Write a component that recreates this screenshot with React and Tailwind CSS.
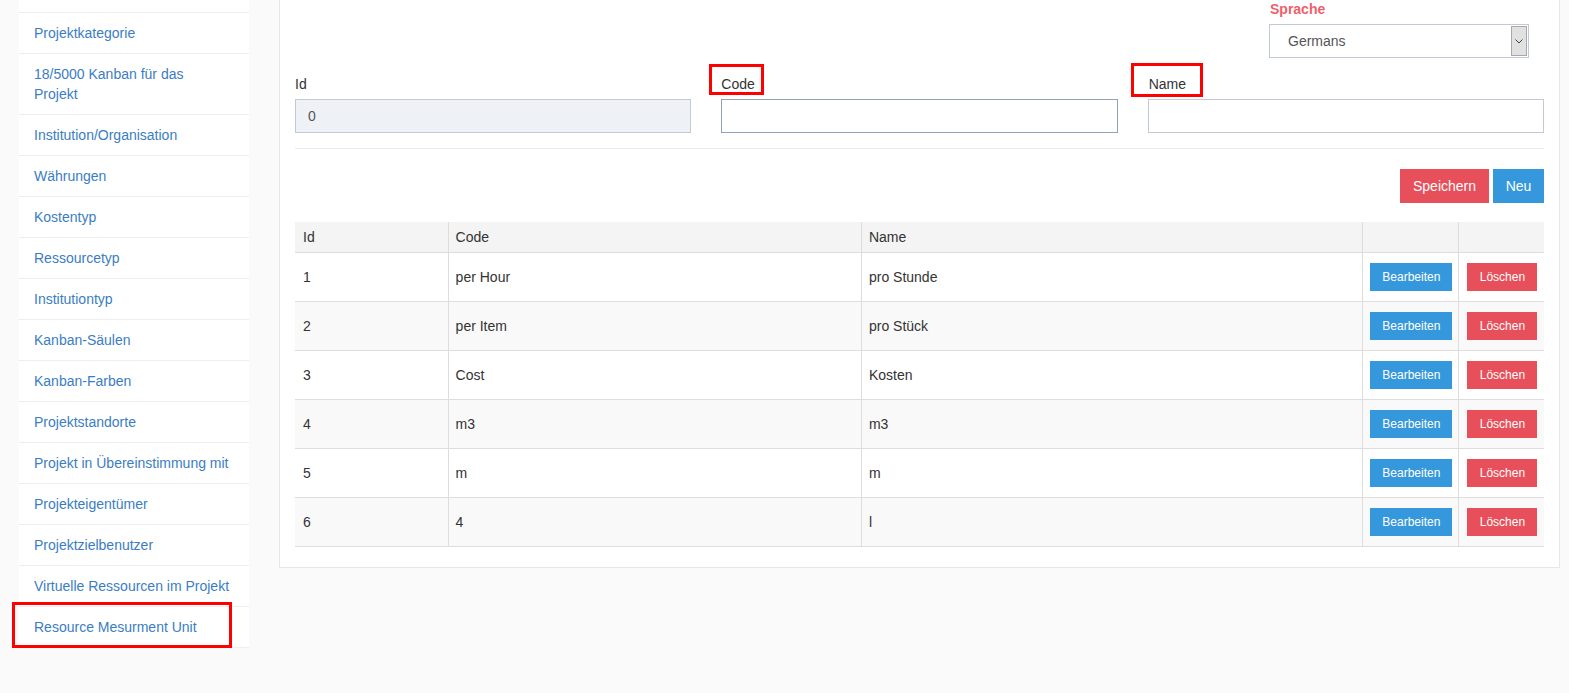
import React from 'react';

const menu = [
  'Projektkategorie',
  '18/5000 Kanban für das Projekt',
  'Institution/Organisation',
  'Währungen',
  'Kostentyp',
  'Ressourcetyp',
  'Institutiontyp',
  'Kanban-Säulen',
  'Kanban-Farben',
  'Projektstandorte',
  'Projekt in Übereinstimmung mit',
  'Projekteigentümer',
  'Projektzielbenutzer',
  'Virtuelle Ressourcen im Projekt',
  'Resource Mesurment Unit',
];

const units = [
  { id: 1, code: 'per Hour', name: 'pro Stunde' },
  { id: 2, code: 'per Item', name: 'pro Stück' },
  { id: 3, code: 'Cost', name: 'Kosten' },
  { id: 4, code: 'm3', name: 'm3' },
  { id: 5, code: 'm', name: 'm' },
  { id: 6, code: '4', name: 'l' },
];

const Sidebar = () => (
  <div className="ml-[19px] w-[230px] shrink-0 self-start bg-white">
    <div className="h-[13px] border-b border-[#eeeeee]" />
    {menu.map((item, i) => (
      <div key={item} className="relative border-b border-[#eeeeee] py-[10px] pl-[15px] pr-[10px] leading-[20px] text-[14px] text-[#3a7dc4]">
        {item === '18/5000 Kanban für das Projekt' ? (
          <span>18/5000 Kanban für das<br />Projekt</span>
        ) : (
          item
        )}
        {i === menu.length - 1 && (
          <span className="absolute left-[-7px] top-[-5px] h-[46px] w-[220px] border-[3px] border-[#ff0000]" />
        )}
      </div>
    ))}
  </div>
);

const FieldLabel = ({ children, box }) => (
  <label className="relative mb-[5px] block leading-[20px] text-[14px] text-[#333]">
    {children}
    {box}
  </label>
);

const Form = () => (
  <div>
    <div className="flex justify-end pr-[15px]">
      <div className="w-[260px]">
        <div className="pl-[1px] leading-[18px] text-[14px] font-bold text-[#ef5f6d]">Sprache</div>
        <div className="mt-[6px] flex h-[34px] items-stretch border border-[#c2cad8] bg-white">
          <div className="flex flex-1 items-center pl-[18px] text-[14px] text-[#555]">Germans</div>
          <div className="my-[1px] mr-[1px] flex w-[16px] items-center justify-center border border-[#a9a9a9] bg-[#e1e1e1]">
            <svg width="8" height="5" viewBox="0 0 8 5" fill="none">
              <path d="M0.5 0.5 L4 4 L7.5 0.5" stroke="#444" strokeWidth="1" />
            </svg>
          </div>
        </div>
      </div>
    </div>

    <div className="mt-[16px] grid grid-cols-3 gap-x-[30px]">
      <div>
        <FieldLabel>Id</FieldLabel>
        <div className="flex h-[34px] items-center border border-[#c2cad8] bg-[#eef1f5] px-[12px] text-[14px] text-[#555]">0</div>
      </div>
      <div>
        <FieldLabel box={<span className="absolute left-[-12px] top-[-10px] h-[31px] w-[55px] border-[3px] border-[#ff0000]" />}>
          Code
        </FieldLabel>
        <div className="h-[34px] border border-[#93a1bb] bg-white" />
      </div>
      <div>
        <FieldLabel box={<span className="absolute left-[-17px] top-[-11px] h-[34px] w-[72px] border-[3px] border-[#ff0000]" />}>
          <span className="pl-[1px]">Name</span>
        </FieldLabel>
        <div className="h-[34px] border border-[#c2cad8] bg-white" />
      </div>
    </div>

    <div className="mt-[15px] border-t border-[#e7ecf1]" />

    <div className="mt-[20px] flex justify-end gap-[4px]">
      <button type="button" className="h-[34px] w-[89px] bg-[#e7505a] text-[14px] text-white">Speichern</button>
      <button type="button" className="h-[34px] w-[51px] bg-[#3598dc] text-[14px] text-white">Neu</button>
    </div>
  </div>
);

const UnitTable = () => (
  <table className="mt-[19px] w-full table-fixed border-collapse text-[14px] text-[#333]">
    <colgroup>
      <col className="w-[153px]" />
      <col className="w-[413px]" />
      <col className="w-[501px]" />
      <col className="w-[96px]" />
      <col className="w-[85px]" />
    </colgroup>
    <thead>
      <tr className="h-[30px] bg-[#f4f4f4] text-left">
        <th className="border-b border-[#dddddd] px-[8px] pt-[2px] font-normal">Id</th>
        <th className="border-b border-l border-[#dddddd] px-[7px] pt-[2px] font-normal">Code</th>
        <th className="border-b border-l border-[#dddddd] px-[7px] pt-[2px] font-normal">Name</th>
        <th className="border-b border-l border-[#dddddd]" />
        <th className="border-b border-l border-[#dddddd]" />
      </tr>
    </thead>
    <tbody>
      {units.map((u, i) => (
        <tr key={u.id} className={i % 2 === 1 ? 'h-[49px] bg-[#f9f9f9]' : 'h-[49px] bg-white'}>
          <td className="border-b border-[#dddddd] px-[8px] pt-[2px]">{u.id}</td>
          <td className="border-b border-l border-[#dddddd] px-[7px] pt-[2px]">{u.code}</td>
          <td className="border-b border-l border-[#dddddd] px-[7px] pt-[2px]">{u.name}</td>
          <td className="border-b border-l border-[#dddddd] pl-[7px] pr-0">
            <button type="button" className="h-[28px] w-[82px] bg-[#3598dc] text-[12px] text-white">Bearbeiten</button>
          </td>
          <td className="border-b border-l border-[#dddddd] pl-[8px] pr-0">
            <button type="button" className="h-[28px] w-[70px] bg-[#e7505a] text-[12px] text-white">Löschen</button>
          </td>
        </tr>
      ))}
    </tbody>
  </table>
);

export default function App() {
  return (
    <div className="flex h-[693px] w-[1569px] items-start overflow-hidden bg-[#fafafa] font-['Liberation_Sans',Arial,sans-serif]">
      <Sidebar />
      <div className="ml-[30px] w-[1281px] shrink-0 border-x border-b border-[#e7e7e7] bg-white px-[15px] pb-[20px] pt-0">
        <Form />
        <UnitTable />
      </div>
    </div>
  );
}
